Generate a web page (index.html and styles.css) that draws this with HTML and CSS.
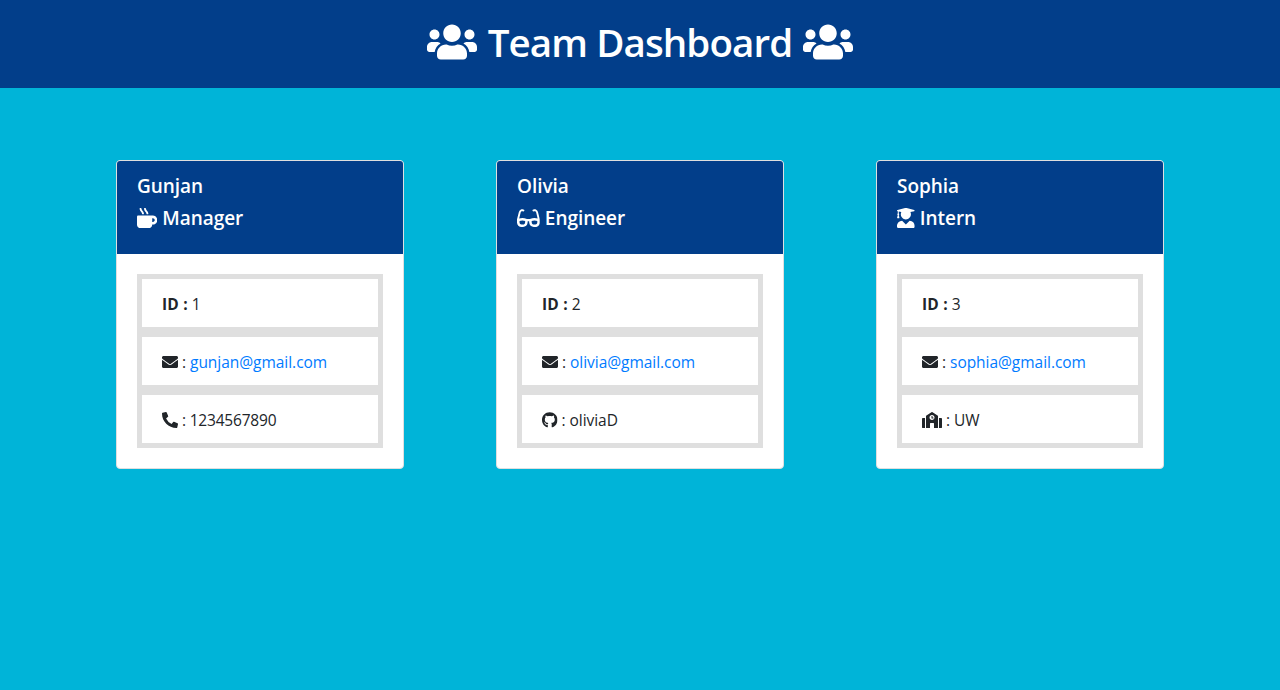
FILE: index.html
```html
<!DOCTYPE html>
<html lang="en">
<head>
<meta charset="utf-8">
<title>Team Dashboard</title>
<link rel="stylesheet" href="styles.css">
</head>
<body>
<svg class="sprite" aria-hidden="true">
  <symbol id="users" viewBox="0 0 640 512"><path d="M96 224c35.3 0 64-28.7 64-64s-28.7-64-64-64-64 28.7-64 64 28.7 64 64 64zm448 0c35.3 0 64-28.7 64-64s-28.7-64-64-64-64 28.7-64 64 28.7 64 64 64zm32 32h-64c-17.6 0-33.5 7.1-45.1 18.6 40.3 22.1 68.9 62 75.1 109.4h66c17.7 0 32-14.3 32-32v-32c0-35.3-28.7-64-64-64zm-256 0c61.9 0 112-50.1 112-112S381.9 32 320 32 208 82.1 208 144s50.1 112 112 112zm76.8 32h-8.3c-20.8 10-43.9 16-68.5 16s-47.6-6-68.5-16h-8.3C179.6 288 128 339.6 128 403.2V432c0 26.5 21.5 48 48 48h288c26.5 0 48-21.5 48-48v-28.8c0-63.6-51.6-115.2-115.2-115.2zm-223.7-13.4C161.5 263.1 145.6 256 128 256H64c-35.3 0-64 28.7-64 64v32c0 17.7 14.3 32 32 32h65.9c6.3-47.4 34.9-87.3 75.2-109.4z"/></symbol>
  <symbol id="mug" viewBox="0 0 512 512"><path d="M127.1 146.5c1.3 7.7 8 13.5 16 13.5h16.5c9.8 0 17.6-8.5 16.3-18-3.8-28.2-16.4-54.2-36.6-74.7-14.4-14.7-23.6-33.3-26.4-53.5C111.8 5.9 105 0 96.8 0H80.4C70.6 0 63 8.5 64.1 18c3.9 31.9 18 61.3 40.6 84.4 12 12.2 19.7 27.5 22.4 44.1zm112 0c1.3 7.7 8 13.5 16 13.5h16.5c9.8 0 17.6-8.5 16.3-18-3.8-28.2-16.4-54.2-36.6-74.7-14.4-14.7-23.6-33.3-26.4-53.5C223.8 5.9 217 0 208.8 0h-16.4c-9.8 0-17.5 8.5-16.3 18 3.9 31.9 18 61.3 40.6 84.4 12 12.2 19.7 27.5 22.4 44.1zM400 192H32c-17.7 0-32 14.3-32 32v192c0 53 43 96 96 96h192c53 0 96-43 96-96h16c61.8 0 112-50.2 112-112s-50.2-112-112-112zm0 160h-16v-96h16c26.5 0 48 21.5 48 48s-21.5 48-48 48z"/></symbol>
  <symbol id="glasses" viewBox="0 0 576 512"><path d="M574.1 280.37L528.75 98.66c-5.91-23.7-21.59-44.05-43-55.81-21.44-11.73-46.97-14.11-70.19-6.33l-15.25 5.08c-8.39 2.79-12.92 11.86-10.12 20.24l5.06 15.18c2.79 8.38 11.85 12.91 20.23 10.12l13.18-4.39c10.87-3.62 23-3.57 33.16 1.73 10.29 5.37 17.57 14.56 20.37 25.82l38.46 153.82c-22.19-6.81-49.79-12.46-81.2-12.46-34.77 0-73.98 7.02-114.85 26.74h-73.18c-40.87-19.74-80.08-26.75-114.86-26.75-31.42 0-59.02 5.65-81.21 12.46l38.46-153.83c2.79-11.25 10.09-20.45 20.38-25.81 10.16-5.3 22.28-5.35 33.15-1.73l13.17 4.39c8.38 2.79 17.44-1.74 20.23-10.12l5.06-15.18c2.8-8.38-1.73-17.45-10.12-20.24l-15.25-5.08c-23.22-7.78-48.75-5.41-70.19 6.33-21.41 11.77-37.09 32.11-43 55.8L1.9 280.37A64.218 64.218 0 0 0 0 295.86v70.25C0 429.01 51.58 480 115.2 480h37.12c60.28 0 110.37-45.94 114.88-105.37l2.93-38.63h35.75l2.93 38.63C313.31 434.06 363.4 480 423.68 480h37.12c63.62 0 115.2-50.99 115.2-113.88v-70.25c0-5.23-.64-10.43-1.9-15.5zm-370.72 89.42c-1.97 25.91-24.4 46.21-51.06 46.21H115.2C86.97 416 64 393.62 64 366.11v-37.54c18.12-6.49 43.42-12.92 72.58-12.92 23.86 0 47.26 4.33 69.93 12.92l-3.13 41.22zM512 366.12c0 27.51-22.97 49.88-51.2 49.88h-37.12c-26.67 0-49.1-20.3-51.06-46.21l-3.13-41.22c22.67-8.59 46.08-12.92 69.95-12.92 29.12 0 54.43 6.44 72.56 12.93v37.54z"/></symbol>
  <symbol id="graduate" viewBox="0 0 448 512"><path d="M319.4 320.6L224 416l-95.4-95.4C57.1 323.7 0 382.2 0 454.4v9.6c0 26.5 21.5 48 48 48h352c26.5 0 48-21.5 48-48v-9.6c0-72.2-57.1-130.7-128.6-133.8zM13.6 79.8l6.4 1.5v58.4c-7 4.2-12 11.5-12 20.3 0 8.4 4.6 15.4 11.1 19.7L3.5 242c-1.7 6.9 2.1 14 7.6 14h41.8c5.5 0 9.3-7.1 7.6-14l-15.6-62.3C51.4 175.4 56 168.4 56 160c0-8.8-5-16.1-12-20.3V87.1l66 15.9c-8.6 17.2-14 36.4-14 57 0 70.7 57.3 128 128 128s128-57.3 128-128c0-20.6-5.3-39.8-14-57l96.3-23.2c18.2-4.4 18.2-27.1 0-31.5l-190.4-46c-13-3.1-26.7-3.1-39.7 0L13.6 48.2c-18.1 4.4-18.1 27.2 0 31.6z"/></symbol>
  <symbol id="envelope" viewBox="0 0 512 512"><path d="M502.3 190.8c3.9-3.1 9.7-.2 9.7 4.7V400c0 26.5-21.5 48-48 48H48c-26.5 0-48-21.5-48-48V195.6c0-5 5.7-7.8 9.7-4.7 22.4 17.4 52.1 39.5 154.1 113.6 21.1 15.4 56.7 47.8 92.2 47.6 35.7.3 72-32.8 92.3-47.6 102-74.1 131.6-96.3 154-113.7zM256 320c23.2.4 56.6-29.2 73.4-41.4 132.7-96.3 142.8-104.7 173.4-128.7 5.8-4.5 9.2-11.5 9.2-18.9v-19c0-26.5-21.5-48-48-48H48c-26.5 0-48 21.5-48 48v19c0 7.4 3.4 14.3 9.2 18.9 30.6 23.9 40.7 32.4 173.4 128.7 16.8 12.2 50.2 41.8 73.4 41.4z"/></symbol>
  <symbol id="phone" viewBox="0 0 512 512"><path d="M497.39 361.8l-112-48a24 24 0 0 0-28 6.9l-49.6 60.6A370.66 370.66 0 0 1 130.6 204.11l60.6-49.6a23.94 23.94 0 0 0 6.9-28l-48-112A24.16 24.16 0 0 0 122.6.61l-104 24A24 24 0 0 0 0 48c0 256.5 207.9 464 464 464a24 24 0 0 0 23.4-18.6l24-104a24.29 24.29 0 0 0-14.01-27.6z"/></symbol>
  <symbol id="github" viewBox="0 0 496 512"><path d="M165.9 397.4c0 2-2.3 3.6-5.2 3.6-3.3.3-5.6-1.3-5.6-3.6 0-2 2.3-3.6 5.2-3.6 3-.3 5.6 1.3 5.6 3.6zm-31.1-4.5c-.7 2 1.3 4.3 4.3 4.9 2.6 1 5.6 0 6.2-2s-1.3-4.3-4.3-5.2c-2.6-.7-5.5.3-6.2 2.3zm44.2-1.7c-2.9.7-4.9 2.6-4.6 4.9.3 2 2.9 3.3 5.9 2.6 2.9-.7 4.9-2.6 4.6-4.6-.3-1.9-3-3.2-5.9-2.9zM244.8 8C106.1 8 0 113.3 0 252c0 110.9 69.8 205.8 169.5 239.2 12.8 2.3 17.3-5.6 17.3-12.1 0-6.2-.3-40.4-.3-61.4 0 0-70 15-84.7-29.8 0 0-11.4-29.1-27.8-36.6 0 0-22.9-15.7 1.6-15.4 0 0 24.9 2 38.6 25.8 21.9 38.6 58.6 27.5 72.9 20.9 2.3-16 8.8-27.1 16-33.7-55.9-6.2-112.3-14.3-112.3-110.5 0-27.5 7.6-41.3 23.6-58.9-2.6-6.5-11.1-33.3 2.6-67.9 20.9-6.5 69 27 69 27 20-5.6 41.5-8.5 62.8-8.5s42.8 2.9 62.8 8.5c0 0 48.1-33.6 69-27 13.7 34.7 5.2 61.4 2.6 67.9 16 17.7 25.8 31.5 25.8 58.9 0 96.5-58.9 104.2-114.8 110.5 9.2 7.9 17 22.9 17 46.4 0 33.7-.3 75.4-.3 83.6 0 6.5 4.6 14.4 17.3 12.1C428.2 457.8 496 362.9 496 252 496 113.3 383.5 8 244.8 8z"/></symbol>
  <symbol id="school" viewBox="0 0 640 512"><path d="M0 224v272c0 8.84 7.16 16 16 16h80V192H32c-17.67 0-32 14.33-32 32zm360-48h-24v-40c0-4.42-3.58-8-8-8h-16c-4.42 0-8 3.58-8 8v64c0 4.42 3.58 8 8 8h48c4.42 0 8-3.58 8-8v-16c0-4.42-3.58-8-8-8zm137.75-63.96l-160-106.67a32.02 32.02 0 0 0-35.5 0l-160 106.67A32.002 32.002 0 0 0 128 138.66V512h128V368c0-8.84 7.16-16 16-16h96c8.84 0 16 7.16 16 16v144h128V138.67c0-10.7-5.35-20.69-14.25-26.63zM320 256c-44.18 0-80-35.82-80-80s35.82-80 80-80 80 35.82 80 80-35.82 80-80 80zm288-64h-64v320h80c8.84 0 16-7.16 16-16V224c0-17.67-14.33-32-32-32z"/></symbol>
</svg>
<header class="banner">
  <svg class="icon wide"><use href="#users"/></svg>
  <h1 class="title">Team Dashboard</h1>
  <svg class="icon wide"><use href="#users"/></svg>
</header>
<main class="team">
  <section class="card">
    <div class="card-header">
      <h2 class="name">Gunjan</h2>
      <h3 class="role"><svg class="icon"><use href="#mug"/></svg><span>Manager</span></h3>
    </div>
    <ul class="details">
      <li><span><b>ID :</b> 1</span></li>
      <li><svg class="icon"><use href="#envelope"/></svg><span>: <a href="#">gunjan@gmail.com</a></span></li>
      <li><svg class="icon"><use href="#phone"/></svg><span class="number">: 1234567890</span></li>
    </ul>
  </section>
  <section class="card">
    <div class="card-header">
      <h2 class="name">Olivia</h2>
      <h3 class="role"><svg class="icon glasses"><use href="#glasses"/></svg><span>Engineer</span></h3>
    </div>
    <ul class="details">
      <li><span><b>ID :</b> 2</span></li>
      <li><svg class="icon"><use href="#envelope"/></svg><span>: <a href="#">olivia@gmail.com</a></span></li>
      <li><svg class="icon github"><use href="#github"/></svg><span>: oliviaD</span></li>
    </ul>
  </section>
  <section class="card">
    <div class="card-header">
      <h2 class="name">Sophia</h2>
      <h3 class="role"><svg class="icon graduate"><use href="#graduate"/></svg><span>Intern</span></h3>
    </div>
    <ul class="details">
      <li><span><b>ID :</b> 3</span></li>
      <li><svg class="icon"><use href="#envelope"/></svg><span>: <a href="#">sophia@gmail.com</a></span></li>
      <li><svg class="icon wide"><use href="#school"/></svg><span>: UW</span></li>
    </ul>
  </section>
</main>
</body>
</html>
```
FILE: styles.css
```css
* { box-sizing: border-box; }
body {
  margin: 0;
  min-height: 100vh;
  background: #00b4d8;
  color: #212529;
  font: 16px/24px "Segoe UI", "Open Sans", "Noto Sans", sans-serif;
}
.sprite { display: none; }
.icon { width: 1em; height: 1em; flex: none; fill: currentColor; }
.icon.wide { width: 1.25em; }
.icon.glasses { width: 1.125em; }
.icon.graduate { width: .875em; }
.icon.github { width: .96875em; }
.banner {
  display: flex;
  align-items: center;
  justify-content: center;
  gap: 11px;
  height: 88px;
  padding-bottom: 5px;
  background: #023e8a;
  color: #fff;
  font-size: 40px;
}
.title {
  margin: 0;
  font-size: 38.5px;
  font-weight: 550;
  line-height: 48px;
  letter-spacing: -.9px;
  white-space: nowrap;
}
.team {
  display: flex;
  justify-content: center;
  gap: 92px;
  padding-top: 72px;
}
.card {
  width: 288px;
  height: 309px;
  border: 1px solid #dfdfdf;
  border-radius: 4px;
  background: #fff;
  overflow: hidden;
}
.card-header {
  height: 93px;
  padding: 13px 20px 0;
  background: #023e8a;
  color: #fff;
}
.name, .role {
  margin: 0 0 8px;
  font-size: 19px;
  font-weight: 600;
  line-height: 24px;
  letter-spacing: -.05px;
}
.role { display: flex; align-items: center; gap: 5px; }
.role .icon { font-size: 20.3px; }
.details {
  margin: 20px;
  padding: 0;
  list-style: none;
}
.details li {
  display: flex;
  align-items: center;
  gap: 4px;
  height: 58px;
  padding: 2px 20px 0;
  border: 5px solid #dfdfdf;
  font-size: 15.5px;
  letter-spacing: -.04px;
  white-space: nowrap;
}
.details b { letter-spacing: .2px; }
.details .number { letter-spacing: -.2px; }
.details .icon { font-size: 16px; }
.details a { color: #007bff; text-decoration: none; }
```
